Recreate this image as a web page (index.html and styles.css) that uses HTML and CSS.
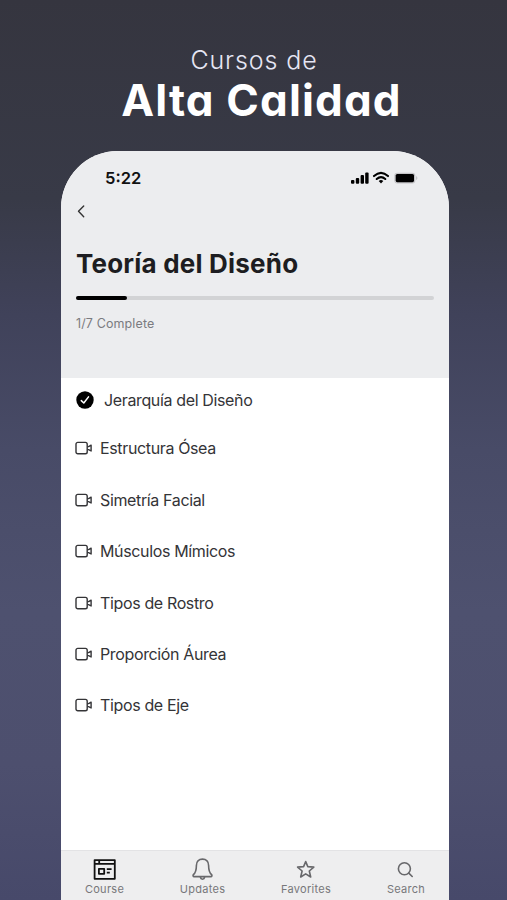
FILE: index.html
```html
<!DOCTYPE html>
<html lang="es">
<head>
<meta charset="utf-8">
<title>Teoría del Diseño</title>
<link rel="stylesheet" href="styles.css">
</head>
<body>
<svg width="0" height="0" class="defs" aria-hidden="true">
  <symbol id="video" viewBox="0 0 18 14">
    <rect x="1" y="1.4" width="11.2" height="11.4" rx="1.8"/>
    <path d="M12.4 5.6 H13.6 L16.1 4.2 V10 L13.6 8.6 H12.4"/>
  </symbol>
</svg>
<main class="page">
  <h1 class="headline">
    <span class="headline-top">Cursos de</span>
    <span class="headline-main">Alta Calidad</span>
  </h1>
  <section class="phone">
    <header class="header">
      <div class="status">
        <span class="time">5:22</span>
        <svg class="status-icons" width="68" height="16" viewBox="0 0 68 16">
          <rect x="1" y="10" width="3.4" height="3.8" rx="1"/>
          <rect x="5.8" y="8" width="3.4" height="5.8" rx="1"/>
          <rect x="10.6" y="5" width="3.4" height="8.8" rx="1"/>
          <rect x="15.2" y="2.4" width="3.4" height="11.4" rx="1"/>
          <g class="wifi">
            <path d="M24 6.1 Q31 -0.3 38 6.1"/>
            <path d="M26.7 9 Q31 5.2 35.3 9"/>
          </g>
          <path d="M28.7 10.9 Q31 9.1 33.3 10.9 L31 13.5 Z"/>
          <rect class="battery" x="44.3" y="2.8" width="21" height="10.6" rx="3"/>
          <rect x="45.7" y="4" width="18.3" height="8.2" rx="1.6"/>
          <path class="cap" d="M66.3 6 Q68.4 8.1 66.3 10.2 Z"/>
        </svg>
      </div>
      <svg class="back" width="10" height="14" viewBox="0 0 10 14"><path d="M7.7 1.9 L2.5 7.3 L7.7 12.7"/></svg>
      <h2 class="title">Teoría del Diseño</h2>
      <div class="progress"><div class="progress-fill"></div></div>
      <p class="complete">1/7 Complete</p>
    </header>
    <ul class="lessons">
      <li class="lesson done">
        <svg class="check" width="18" height="18" viewBox="0 0 18 18"><circle cx="9" cy="9" r="8.7"/><path d="M5.3 9.6 L7.8 12 L12.5 5.9"/></svg>
        <span>Jerarquía del Diseño</span>
      </li>
      <li class="lesson"><svg class="video"><use href="#video"/></svg><span>Estructura Ósea</span></li>
      <li class="lesson"><svg class="video"><use href="#video"/></svg><span>Simetría Facial</span></li>
      <li class="lesson"><svg class="video"><use href="#video"/></svg><span>Músculos Mímicos</span></li>
      <li class="lesson"><svg class="video"><use href="#video"/></svg><span>Tipos de Rostro</span></li>
      <li class="lesson"><svg class="video"><use href="#video"/></svg><span>Proporción Áurea</span></li>
      <li class="lesson"><svg class="video"><use href="#video"/></svg><span>Tipos de Eje</span></li>
    </ul>
    <nav class="tabs">
      <a class="tab active">
        <svg width="24" height="24" viewBox="0 0 24 24">
          <path d="M1.6 3.1 H21.8 V21.8 H1.6 Z M1.6 6.9 H21.8 M6.2 3.1 V6.9 M5.9 11.8 H11.2 V16.8 H5.9 Z M13.8 12.2 H18.6 M13.8 15.7 H16.8"/>
        </svg>
        <span>Course</span>
      </a>
      <a class="tab">
        <svg width="24" height="24" viewBox="0 0 24 24">
          <path d="M11.5 2.1 C7.7 2.1 5.4 4.8 5.4 8.4 C5.4 13.5 4.4 15.8 2.4 17.6 C1.7 18.4 2.1 19.6 3.1 19.6 H19.9 C20.9 19.6 21.3 18.4 20.6 17.6 C18.6 15.8 17.6 13.5 17.6 8.4 C17.6 4.8 15.3 2.1 11.5 2.1 Z M9.4 20.4 C9.8 22.8 13.2 22.8 13.6 20.4"/>
        </svg>
        <span>Updates</span>
      </a>
      <a class="tab">
        <svg width="24" height="24" viewBox="0 0 24 24">
          <path class="star" d="M11.7 4.6 L13.8 9.6 L19.8 10.1 L15.3 14 L16.7 20 L11.7 16.8 L6.7 20 L8.1 14 L3.6 10.1 L9.6 9.6 Z"/>
        </svg>
        <span>Favorites</span>
      </a>
      <a class="tab">
        <svg width="24" height="24" viewBox="0 0 24 24"><circle cx="10.4" cy="11.7" r="6"/><path d="M14.8 16.1 L18.2 19.5"/></svg>
        <span>Search</span>
      </a>
    </nav>
  </section>
</main>
</body>
</html>
```
FILE: styles.css
```css
* { box-sizing: border-box; }
body {
  margin: 0;
  font-family: Inter, "Liberation Sans", sans-serif;
}
.defs { display: block; }
.page {
  height: 900px;
  overflow: hidden;
  display: flex;
  flex-direction: column;
  padding: 44px 58px 0 61px;
  background: linear-gradient(180deg, #35353f 0%, #383a47 22%, #40425a 35%, #484b67 50%, #4e516f 68%, #4d4f6e 85%, #47496a 100%);
}
.headline {
  margin: 0;
  height: 107px;
  display: flex;
  flex-direction: column;
  align-items: center;
  color: #fff;
  white-space: nowrap;
  font-feature-settings: "cv11";
}
.headline-top {
  font-size: 25px;
  line-height: 32px;
  font-weight: 300;
  color: #e6e6f4;
  letter-spacing: 0.9px;
  margin-left: -2px;
}
.headline-main {
  font-size: 44px;
  line-height: 48px;
  font-weight: 700;
  letter-spacing: 1.15px;
  margin-left: 13px;
}
.phone {
  height: 749px;
  display: flex;
  flex-direction: column;
  overflow: hidden;
  border-radius: 57px 57px 0 0;
  background: #fff;
}
.header {
  height: 227px;
  padding: 17px 15px 0;
  background: #ecedef;
  color: #1d1d21;
}
.status {
  height: 20px;
  display: flex;
  justify-content: space-between;
  align-items: center;
  padding: 0 16px 0 29px;
}
.time { font-size: 16.5px; font-weight: 600; color: #111; }
.wifi { fill: none; stroke: #000; stroke-width: 2.1; stroke-linecap: round; }
.battery { fill: #c4c4c7; }
.cap { fill: #b4b4b7; }
.back {
  display: block;
  margin: 16px 0 0;
  fill: none;
  stroke: #333;
  stroke-width: 1.4;
  stroke-linecap: round;
  stroke-linejoin: round;
}
.title {
  margin: 29px 0 0;
  font-size: 26px;
  line-height: 34px;
  font-weight: 700;
  letter-spacing: 0.2px;
  white-space: nowrap;
}
.progress {
  height: 4px;
  margin: 14.6px 0 0 0;
  border-radius: 2px;
  background: #d2d3d5;
}
.progress-fill {
  width: 14.3%;
  height: 4px;
  border-radius: 2px;
  background: #000;
}
.complete {
  margin: 15px 0 0;
  font-size: 12.5px;
  line-height: 18px;
  letter-spacing: 0.12px;
  color: #7b7b80;
}
.lessons {
  flex: 1;
  margin: 0;
  padding: 0 14px;
  list-style: none;
}
.lesson {
  height: 51.4px;
  display: flex;
  align-items: center;
  gap: 7px;
  font-size: 16px;
  letter-spacing: -0.36px;
  color: #343437;
  white-space: nowrap;
}
.lesson.done { height: 44.8px; padding-left: 1px; gap: 10px; }
.video {
  width: 18px;
  height: 14px;
  fill: none;
  stroke: #343437;
  stroke-width: 1.4;
  stroke-linejoin: round;
}
.check path { fill: none; stroke: #fff; stroke-width: 1.5; stroke-linecap: round; stroke-linejoin: round; }
.tabs {
  height: 50px;
  display: grid;
  grid-template-columns: 87px 109px 98px 102px;
  background: #eeeeef;
  border-top: 1px solid #e3e3e5;
}
.tab {
  display: flex;
  flex-direction: column;
  align-items: center;
  padding-top: 6px;
  font-size: 11px;
  line-height: 17px;
  letter-spacing: 0.28px;
  color: #77777a;
}
.tab svg { fill: none; stroke: #68686b; stroke-width: 1.6; stroke-linecap: round; stroke-linejoin: round; }
.tab.active svg { stroke: #111; stroke-width: 1.8; stroke-linecap: butt; }
```
